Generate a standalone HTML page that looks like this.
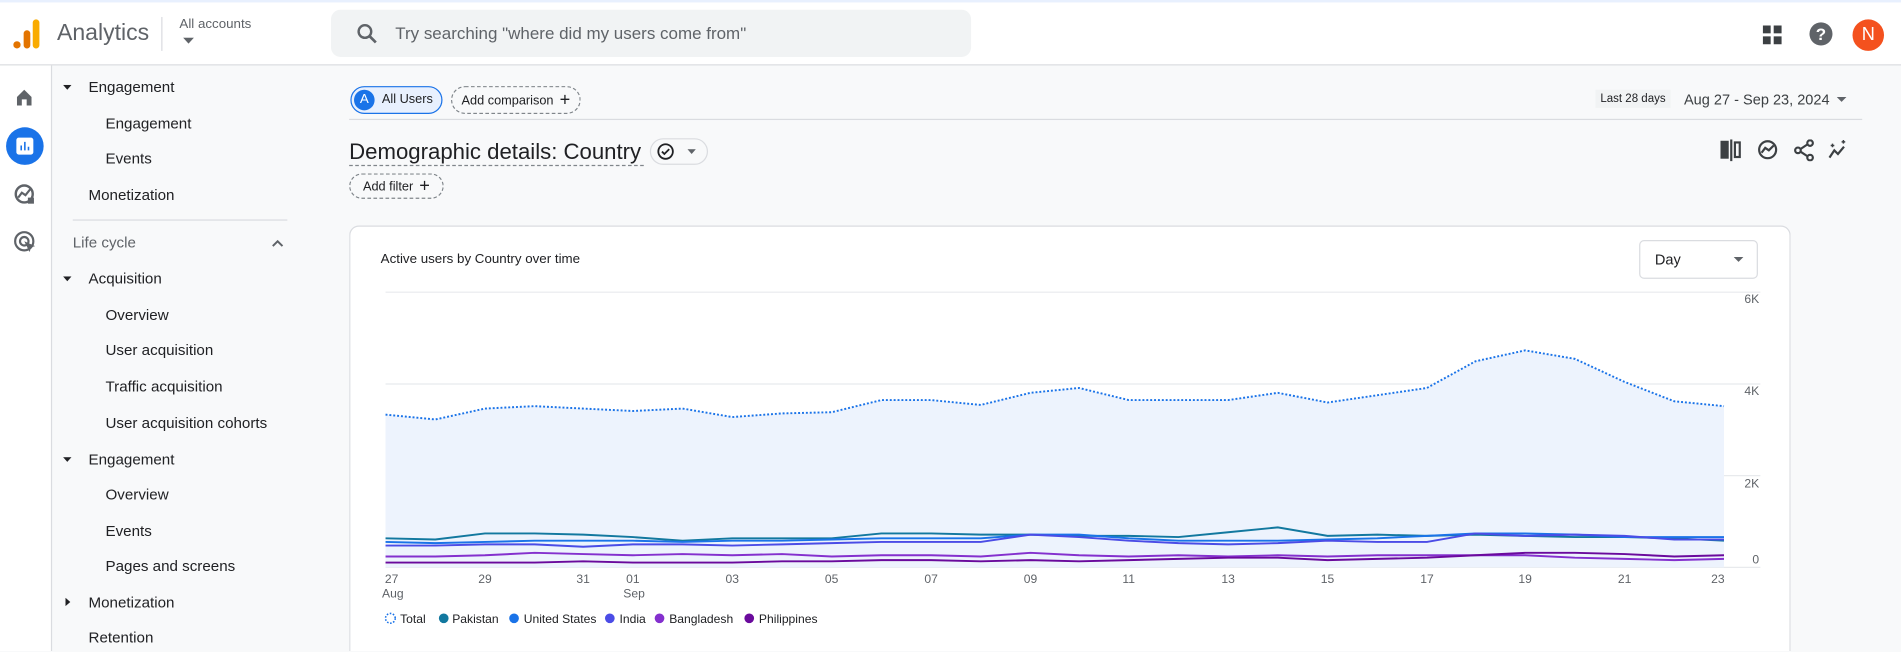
<!DOCTYPE html>
<html><head><meta charset="utf-8"><style>
html,body{margin:0;padding:0;width:1901px;height:652px;overflow:hidden;background:#f8f9fa;font-family:"Liberation Sans",sans-serif;}
#w{position:absolute;left:0;top:0;width:1568px;height:537px;transform:scale(1.21237);transform-origin:0 0;background:#f8f9fa;overflow:hidden;}
.a{position:absolute;}
.t{position:absolute;white-space:nowrap;color:#202124;}
.nav{font-size:12.5px;color:#202124;}
.chip{position:absolute;border:1px dashed #80868b;border-radius:12px;font-size:10.5px;color:#202124;box-sizing:border-box;display:flex;align-items:center;justify-content:center;gap:5px;}
.chip span{font-size:15px;line-height:10px}
</style></head><body><div id="w">
<!-- top bar -->
<div class="a" style="left:0;top:0;width:1568px;height:54px;background:#fff;border-bottom:1px solid #dadce0;box-sizing:border-box"></div>
<div class="a" style="left:0;top:0;width:1568px;height:2px;background:#e8f0fe"></div>
<svg class="a" style="left:10px;top:15px" width="24" height="26"><circle cx="4" cy="22" r="3" fill="#e37400"/><rect x="9.5" y="10" width="5.5" height="15" rx="2.7" fill="#e37400"/><rect x="17" y="1" width="5.5" height="24" rx="2.7" fill="#f9ab00"/></svg>
<div class="t" style="left:47px;top:17px;font-size:19px;color:#5f6368">Analytics</div>
<div class="a" style="left:133px;top:14px;width:1px;height:28px;background:#dadce0"></div>
<div class="t" style="left:148px;top:14px;font-size:11px;color:#5f6368">All accounts</div>
<svg class="a" style="left:151px;top:31px" width="10" height="6"><path d="M0 0h9L4.5 5z" fill="#5f6368"/></svg>
<div class="a" style="left:273px;top:8px;width:528px;height:39px;background:#f1f3f4;border-radius:8px"></div>
<svg class="a" style="left:294px;top:19px" width="18" height="18"><circle cx="7" cy="7" r="5.2" fill="none" stroke="#5f6368" stroke-width="2"/><path d="M11 11l5 5" stroke="#5f6368" stroke-width="2.2"/></svg>
<div class="t" style="left:326px;top:19px;font-size:14px;color:#5f6368">Try searching "where did my users come from"</div>
<svg class="a" style="left:1454px;top:21px" width="16" height="16" fill="#3c4043"><rect x="0" y="0" width="6.5" height="6.5"/><rect x="9" y="0" width="6.5" height="6.5"/><rect x="0" y="9" width="6.5" height="6.5"/><rect x="9" y="9" width="6.5" height="6.5"/></svg>
<svg class="a" style="left:1492px;top:18px" width="20" height="20"><circle cx="10" cy="10" r="9.5" fill="#5f6368"/><text x="10" y="15" text-anchor="middle" font-size="14" font-weight="bold" fill="#fff" font-family="Liberation Sans">?</text></svg>
<div class="a" style="left:1528px;top:16px;width:26px;height:26px;border-radius:13px;background:#f4511e;color:#fff;font-size:15px;text-align:center;line-height:26px">N</div>
<!-- rail -->
<div class="a" style="left:0;top:54px;width:43px;height:483px;background:#fff;border-right:1px solid #dadce0;box-sizing:border-box"></div>
<svg class="a" style="left:12px;top:72px" width="16" height="16"><path d="M2 8L8 2l6 6v7h-4v-5H6v5H2z" fill="#5f6368"/></svg>
<div class="a" style="left:5px;top:105px;width:31px;height:31px;border-radius:16px;background:#1a73e8"></div>
<svg class="a" style="left:13px;top:113px" width="15" height="15"><rect x="0.5" y="0.5" width="14" height="14" rx="2" fill="#fff"/><path d="M4.5 11V7M7.5 11V4M10.5 11V8" stroke="#1a73e8" stroke-width="1.3"/></svg>
<svg class="a" style="left:11px;top:151px" width="18" height="18"><circle cx="9" cy="9" r="7" fill="none" stroke="#5f6368" stroke-width="2"/><path d="M4 12l3-4 3 2 4-5" fill="none" stroke="#5f6368" stroke-width="1.8"/><rect x="12" y="12" width="5" height="5" fill="#5f6368"/></svg>
<svg class="a" style="left:11px;top:190px" width="20" height="20"><circle cx="9" cy="9" r="7.5" fill="none" stroke="#5f6368" stroke-width="1.8"/><circle cx="9" cy="9" r="3.5" fill="none" stroke="#5f6368" stroke-width="1.8"/><path d="M9 9l9 4-3.5 1-1 4z" fill="#5f6368"/></svg>
<!-- nav -->
<svg class="a" style="left:52px;top:70px" width="8" height="5"><path d="M0 0h7L3.5 4z" fill="#202124"/></svg>
<div class="t nav" style="left:73px;top:65px">Engagement</div>
<div class="t nav" style="left:87px;top:95px">Engagement</div>
<div class="t nav" style="left:87px;top:124px">Events</div>
<div class="t nav" style="left:73px;top:154px">Monetization</div>
<div class="a" style="left:60px;top:181px;width:177px;height:1px;background:#dadce0"></div>
<div class="t nav" style="left:60px;top:193px;color:#5f6368">Life cycle</div>
<svg class="a" style="left:224px;top:197px" width="10" height="7"><path d="M1 6l4-4 4 4" fill="none" stroke="#5f6368" stroke-width="1.6"/></svg>
<svg class="a" style="left:52px;top:228px" width="8" height="5"><path d="M0 0h7L3.5 4z" fill="#202124"/></svg>
<div class="t nav" style="left:73px;top:223px">Acquisition</div>
<div class="t nav" style="left:87px;top:253px">Overview</div>
<div class="t nav" style="left:87px;top:282px">User acquisition</div>
<div class="t nav" style="left:87px;top:312px">Traffic acquisition</div>
<div class="t nav" style="left:87px;top:342px">User acquisition cohorts</div>
<svg class="a" style="left:52px;top:377px" width="8" height="5"><path d="M0 0h7L3.5 4z" fill="#202124"/></svg>
<div class="t nav" style="left:73px;top:372px">Engagement</div>
<div class="t nav" style="left:87px;top:401px">Overview</div>
<div class="t nav" style="left:87px;top:431px">Events</div>
<div class="t nav" style="left:87px;top:460px">Pages and screens</div>
<svg class="a" style="left:54px;top:493px" width="5" height="8"><path d="M0 0v7l4-3.5z" fill="#202124"/></svg>
<div class="t nav" style="left:73px;top:490px">Monetization</div>
<div class="t nav" style="left:73px;top:519px;line-height:15px">Retention</div>
<!-- main header -->
<div class="a" style="left:289px;top:71px;width:76px;height:23px;border:1px solid #1a73e8;border-radius:12px;background:#e8f0fe;box-sizing:border-box"></div>
<div class="a" style="left:292px;top:74px;width:17px;height:17px;border-radius:9px;background:#1a73e8;color:#fff;font-size:11px;text-align:center;line-height:17px">A</div>
<div class="t" style="left:315px;top:76px;font-size:10.5px">All Users</div>
<div class="chip" style="left:372px;top:71px;width:107px;height:23px">Add comparison <span>+</span></div>
<div class="a" style="left:288px;top:98px;width:1248px;height:1px;background:#dadce0"></div>
<div class="t" style="left:1316px;top:74px;font-size:9.5px;background:#f1f3f4;padding:2px 4px">Last 28 days</div>
<div class="t" style="left:1389px;top:75px;font-size:12px;color:#3c4043">Aug 27 - Sep 23, 2024</div>
<svg class="a" style="left:1515px;top:80px" width="9" height="5"><path d="M0 0h8L4 4z" fill="#5f6368"/></svg>
<div class="t" style="left:288px;top:114px;font-size:18.3px">Demographic details: Country</div>
<div class="a" style="left:288px;top:136px;width:243px;border-top:1.5px dashed #80868b"></div>
<div class="a" style="left:536px;top:114px;width:48px;height:22px;border:1px solid #dadce0;border-radius:11px;box-sizing:border-box"></div>
<svg class="a" style="left:542px;top:118px" width="14" height="14"><circle cx="7" cy="7" r="6" fill="none" stroke="#202124" stroke-width="1.5"/><path d="M4 7l2 2 4-4" fill="none" stroke="#202124" stroke-width="1.5"/></svg>
<svg class="a" style="left:567px;top:123px" width="7" height="4"><path d="M0 0h7L3.5 4z" fill="#5f6368"/></svg>
<div class="chip" style="left:288px;top:143px;width:78px;height:21px">Add filter <span>+</span></div>
<svg class="a" style="left:1419px;top:115px" width="120" height="18" fill="none" stroke="#3c4043" stroke-width="1.8">
<rect x="1" y="2" width="5" height="13" fill="#3c4043"/><path d="M9 0v18"/><rect x="12" y="2.5" width="4" height="12"/>
<circle cx="39" cy="8.5" r="7"/><path d="M34 11l3-4 3 2 4-4"/>
<circle cx="64" cy="9" r="2.3"/><circle cx="74" cy="3" r="2.3"/><circle cx="74" cy="15" r="2.3"/><path d="M66 8l6-4M66 10l6 4"/>
<path d="M90 15l4-6 3 3 5-6"/><path d="M91 5h3M92.5 3.5v3M100 2h3M101.5 0.5v3" stroke-width="1.2"/>
</svg>
<!-- card -->
<div class="a" style="left:288px;top:186px;width:1189px;height:351px;background:#fff;border:1px solid #dadce0;border-bottom:none;border-radius:8px 8px 0 0;box-sizing:border-box"></div>
<div class="t" style="left:314px;top:208px;font-size:11px">Active users by Country over time</div>
<div class="a" style="left:1352px;top:198px;width:98px;height:32px;border:1px solid #dadce0;border-radius:4px;box-sizing:border-box"></div>
<div class="t" style="left:1365px;top:207px;font-size:12px">Day</div>
<svg class="a" style="left:1430px;top:212px" width="9" height="5"><path d="M0 0h8L4 4z" fill="#5f6368"/></svg>
<svg class="a" style="left:300px;top:230px" width="1170" height="300" font-family="Liberation Sans" font-size="10" fill="#5f6368">
<g transform="translate(-300,-230)">
<path d="M318 241H1452M318 316.7H1452M318 392.3H1452M318 468H1452" stroke="#e8eaed" stroke-width="1"/>
<polygon fill="#edf3fd" points="318,468 318,342 359,346 400,337 441,335 481,337 522,339 563,337 604,344 645,341 686,340 727,330 768,330 809,334 850,324 890,320 931,330 972,330 1013,330 1054,324 1095,332 1136,326 1177,320 1217,298 1258,289 1299,296 1340,315 1381,331 1422,335 1422,468"/>
<polyline fill="none" stroke="#1a73e8" stroke-width="1.6" stroke-dasharray="1.6 1.6" points="318,342 359,346 400,337 441,335 481,337 522,339 563,337 604,344 645,341 686,340 727,330 768,330 809,334 850,324 890,320 931,330 972,330 1013,330 1054,324 1095,332 1136,326 1177,320 1217,298 1258,289 1299,296 1340,315 1381,331 1422,335"/>
<polyline fill="none" stroke="#12789f" stroke-width="1.6" points="318,444 359,445 400,440 441,440 481,441 522,443 563,446 604,444 645,444 686,444 727,440 768,440 809,441 850,441 890,442 931,442 972,443 1013,439 1054,435 1095,442 1136,441 1177,442 1217,441 1258,442 1299,443 1340,443 1381,444 1422,446"/>
<polyline fill="none" stroke="#1a73e8" stroke-width="1.6" points="318,447 359,448 400,447 441,446 481,446 522,446 563,447 604,446 645,446 686,445 727,444 768,444 809,444 850,441 890,441 931,444 972,446 1013,446 1054,446 1095,445 1136,444 1177,442 1217,440 1258,440 1299,441 1340,443 1381,443 1422,443"/>
<polyline fill="none" stroke="#4b4ce6" stroke-width="1.6" points="318,450 359,450 400,449 441,449 481,451 522,449 563,449 604,450 645,449 686,448 727,447 768,447 809,447 850,441 890,443 931,446 972,448 1013,449 1054,448 1095,446 1136,447 1177,447 1217,440 1258,442 1299,441 1340,442 1381,445 1422,445"/>
<polyline fill="none" stroke="#8430ce" stroke-width="1.6" points="318,459 359,459 400,458 441,456 481,457 522,458 563,457 604,458 645,457 686,459 727,458 768,458 809,459 850,456 890,458 931,459 972,458 1013,459 1054,458 1095,459 1136,458 1177,458 1217,458 1258,458 1299,460 1340,461 1381,462 1422,461"/>
<polyline fill="none" stroke="#6a0a9c" stroke-width="1.6" points="318,464 359,464 400,464 441,464 481,463 522,464 563,464 604,464 645,463 686,463 727,462 768,462 809,463 850,462 890,463 931,462 972,461 1013,460 1054,460 1095,462 1136,461 1177,460 1217,458 1258,456 1299,456 1340,457 1381,459 1422,458"/>
<g text-anchor="end"><text x="1451" y="250">6K</text><text x="1451" y="326">4K</text><text x="1451" y="402">2K</text><text x="1451" y="465">0</text></g>
<g text-anchor="middle"><text x="323" y="481">27</text><text x="324" y="493">Aug</text><text x="400" y="481">29</text><text x="481" y="481">31</text><text x="522" y="481">01</text><text x="523" y="493">Sep</text><text x="604" y="481">03</text><text x="686" y="481">05</text><text x="768" y="481">07</text><text x="850" y="481">09</text><text x="931" y="481">11</text><text x="1013" y="481">13</text><text x="1095" y="481">15</text><text x="1177" y="481">17</text><text x="1258" y="481">19</text><text x="1340" y="481">21</text><text x="1417" y="481">23</text></g>
<g fill="#202124"><circle cx="322" cy="510" r="4" fill="none" stroke="#1a73e8" stroke-width="1.3" stroke-dasharray="1.3 1.3"/><text x="330" y="514">Total</text>
<circle cx="366" cy="510" r="4" fill="#12789f"/><text x="373" y="514">Pakistan</text>
<circle cx="424" cy="510" r="4" fill="#1a73e8"/><text x="432" y="514">United States</text>
<circle cx="503" cy="510" r="4" fill="#4b4ce6"/><text x="511" y="514">India</text>
<circle cx="544" cy="510" r="4" fill="#8430ce"/><text x="552" y="514">Bangladesh</text>
<circle cx="618" cy="510" r="4" fill="#6a0a9c"/><text x="626" y="514">Philippines</text></g>
</g></svg>
</div></body></html>
